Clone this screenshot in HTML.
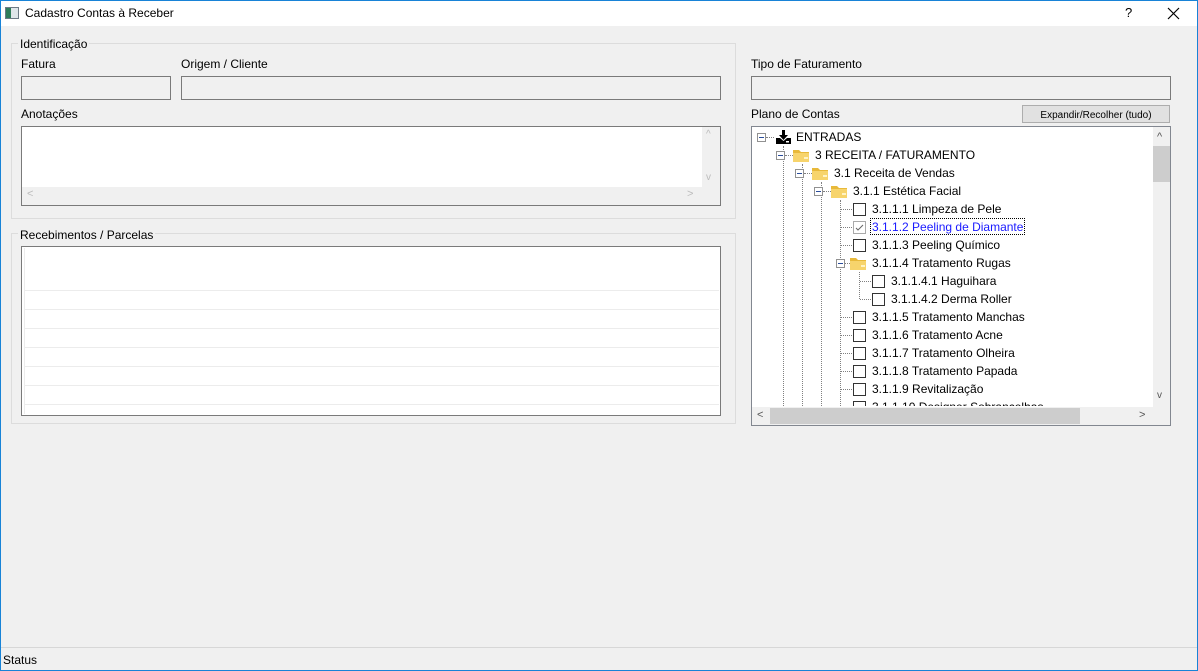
<!DOCTYPE html>
<html><head><meta charset="utf-8"><style>
*{margin:0;padding:0;box-sizing:border-box}
body{width:1198px;height:671px;background:#f0f0f0;font-family:"Liberation Sans",sans-serif;font-size:12px;color:#000;position:relative;overflow:hidden}
.a{position:absolute}
.win{left:0;top:0;width:1198px;height:671px;border:1px solid #1883d7;border-top:none}
.title{left:0;top:0;width:1198px;height:26px;background:#fff;border-top:1px solid #1883d7}
.grp{border:1px solid #dcdcdc}
.lg{background:#f0f0f0;padding:0 2px}
.inp{border:1px solid #7a7a7a;background:#f0f0f0}
.box{border:1px solid #828790;background:#fff}
.row{position:absolute;height:18px;line-height:18px;white-space:nowrap}
.exp{position:absolute;width:9px;height:9px;border:1px solid #919191;background:#fff}
.exp:after{content:"";position:absolute;left:1px;top:3px;width:5px;height:1px;background:#2a4d9b}
.cb{position:absolute;width:13px;height:13px;border:1px solid #333;background:#fff}
.vd{position:absolute;width:0;border-left:1px dotted #808080}
.hd{position:absolute;height:0;border-top:1px dotted #808080}
.fold{position:absolute;width:16px;height:13px}
.gl{position:absolute;left:25px;width:694px;height:1px;background:#ececec}
</style></head><body>
<div class="a title"></div>
<div class="a win"></div>
<div class="a" style="left:5px;top:7px;width:14px;height:12px;border:1px solid #6d7a86;background:linear-gradient(90deg,#2f7d5a 0 5px,#dfe6ea 5px)"></div>
<div class="a" style="left:25px;top:6px;font-size:12px">Cadastro Contas à Receber</div>
<div class="a" style="left:1125px;top:5px;font-size:13px">?</div>
<svg class="a" style="left:1167px;top:7px" width="13" height="13"><path d="M1 1L12 12M12 1L1 12" stroke="#000" stroke-width="1.2"/></svg>

<div class="a grp" style="left:11px;top:43px;width:725px;height:176px"></div>
<div class="a lg" style="left:18px;top:37px">Identificação</div>
<div class="a" style="left:21px;top:57px">Fatura</div>
<div class="a" style="left:181px;top:57px">Origem / Cliente</div>
<div class="a inp" style="left:21px;top:76px;width:150px;height:24px"></div>
<div class="a inp" style="left:181px;top:76px;width:540px;height:24px"></div>
<div class="a" style="left:21px;top:107px">Anotações</div>
<div class="a box" style="left:21px;top:126px;width:700px;height:80px;border-color:#7a7a7a"></div>
<div class="a" style="left:22px;top:187px;width:698px;height:18px;background:#f0f0f0"></div>
<div class="a" style="left:702px;top:127px;width:18px;height:60px;background:#f0f0f0"></div>
<div class="a" style="left:27px;top:188px;color:#bbb;font-size:11px">&lt;</div>
<div class="a" style="left:687px;top:188px;color:#bbb;font-size:11px">&gt;</div>
<div class="a" style="left:706px;top:129px;color:#bbb;font-size:10px">^</div>
<div class="a" style="left:706px;top:172px;color:#bbb;font-size:10px">v</div>

<div class="a grp" style="left:11px;top:233px;width:725px;height:191px"></div>
<div class="a lg" style="left:18px;top:228px">Recebimentos / Parcelas</div>
<div class="a box" style="left:21px;top:246px;width:700px;height:170px;border-color:#7a7a7a"></div>
<div class="a" style="left:24px;top:248px;width:1px;height:166px;background:#ececec"></div>
<div class="gl a" style="top:290px"></div><div class="gl a" style="top:309px"></div><div class="gl a" style="top:328px"></div><div class="gl a" style="top:347px"></div><div class="gl a" style="top:366px"></div><div class="gl a" style="top:385px"></div><div class="gl a" style="top:404px"></div>

<div class="a" style="left:751px;top:57px">Tipo de Faturamento</div>
<div class="a inp" style="left:751px;top:76px;width:420px;height:24px"></div>
<div class="a" style="left:751px;top:107px">Plano de Contas</div>
<div class="a" style="left:1022px;top:105px;width:148px;height:18px;background:#e1e1e1;border:1px solid #adadad;font-size:10px;text-align:center;line-height:19px">Expandir/Recolher (tudo)</div>
<div class="a box" style="left:751px;top:126px;width:420px;height:300px;overflow:hidden">
 <div class="a" style="left:401px;top:0;width:17px;height:280px;background:#f0f0f0"></div>
 <div class="a" style="left:401px;top:19px;width:17px;height:36px;background:#cdcdcd"></div>
 <div class="a" style="left:0;top:280px;width:418px;height:18px;background:#f0f0f0"></div>
 <div class="a" style="left:18px;top:281px;width:310px;height:16px;background:#cdcdcd"></div>
 <div class="a" style="left:5px;top:282px;color:#555;font-size:11px">&lt;</div>
 <div class="a" style="left:387px;top:282px;color:#555;font-size:11px">&gt;</div>
 <div class="a" style="left:405px;top:4px;color:#555;font-size:11px">^</div>
 <div class="a" style="left:405px;top:263px;color:#555;font-size:10px">v</div>
</div>
<div class="a" style="left:752px;top:128px;width:400px;height:278px;overflow:hidden">
 <div class="vd" style="left:31px;top:18px;height:270px"></div>
 <div class="vd" style="left:50px;top:36px;height:250px"></div>
 <div class="vd" style="left:69px;top:54px;height:230px"></div>
 <div class="vd" style="left:88px;top:72px;height:210px"></div>
 <div class="vd" style="left:107px;top:144px;height:27px"></div>
 <div class="exp" style="left:5px;top:5px"></div><div class="hd" style="left:14px;top:9px;width:8px"></div>
 <svg class="a" style="left:23px;top:2px" width="17" height="14"><path d="M7 0h3v5h3l-4.5 5L4 5h3z" fill="#000"/><path d="M1 8h4l3.5 3 3.5-3h4v6H1z" fill="#000"/><rect x="11" y="11" width="3" height="1.5" fill="#fff"/></svg>
 <div class="row" style="left:44px;top:0">ENTRADAS</div>
 <div class="exp" style="left:24px;top:23px"></div><div class="hd" style="left:33px;top:27px;width:8px"></div>
 <svg class="fold" style="left:41px;top:21px"><path d="M0 1h6l2 2h8v10H0z" fill="#e8b93a"/><rect x="0" y="4" width="16" height="9" fill="#f7d46c"/><rect x="11" y="8" width="4" height="2" fill="#fff3c4"/></svg>
 <div class="row" style="left:63px;top:18px">3 RECEITA / FATURAMENTO</div>
 <div class="exp" style="left:43px;top:41px"></div><div class="hd" style="left:52px;top:45px;width:8px"></div>
 <svg class="fold" style="left:60px;top:39px"><path d="M0 1h6l2 2h8v10H0z" fill="#e8b93a"/><rect x="0" y="4" width="16" height="9" fill="#f7d46c"/><rect x="11" y="8" width="4" height="2" fill="#fff3c4"/></svg>
 <div class="row" style="left:82px;top:36px">3.1 Receita de Vendas</div>
 <div class="exp" style="left:62px;top:59px"></div><div class="hd" style="left:71px;top:63px;width:8px"></div>
 <svg class="fold" style="left:79px;top:57px"><path d="M0 1h6l2 2h8v10H0z" fill="#e8b93a"/><rect x="0" y="4" width="16" height="9" fill="#f7d46c"/><rect x="11" y="8" width="4" height="2" fill="#fff3c4"/></svg>
 <div class="row" style="left:101px;top:54px">3.1.1 Estética Facial</div>
 <div class="hd" style="left:89px;top:81px;width:11px"></div><div class="cb" style="left:101px;top:75px"></div><div class="row" style="left:120px;top:72px">3.1.1.1 Limpeza de Pele</div>
 <div class="hd" style="left:89px;top:99px;width:11px"></div><div class="cb" style="left:101px;top:93px;border-color:#aaa"><svg width="11" height="11" style="position:absolute;left:0;top:0"><path d="M2 6l2 2 5-5" stroke="#666" fill="none"/></svg></div><div class="row" style="left:118px;top:90px;color:#1a1aff;border:1px dotted #000;padding:0 1px;height:17px;line-height:16px;background:#fff">3.1.1.2 Peeling de Diamante</div>
 <div class="hd" style="left:89px;top:117px;width:11px"></div><div class="cb" style="left:101px;top:111px"></div><div class="row" style="left:120px;top:108px">3.1.1.3 Peeling Químico</div>
 <div class="exp" style="left:84px;top:131px"></div><div class="hd" style="left:93px;top:135px;width:5px"></div>
 <svg class="fold" style="left:98px;top:129px"><path d="M0 1h6l2 2h8v10H0z" fill="#e8b93a"/><rect x="0" y="4" width="16" height="9" fill="#f7d46c"/><rect x="11" y="8" width="4" height="2" fill="#fff3c4"/></svg>
 <div class="row" style="left:120px;top:126px">3.1.1.4 Tratamento Rugas</div>
 <div class="hd" style="left:108px;top:153px;width:11px"></div><div class="cb" style="left:120px;top:147px"></div><div class="row" style="left:139px;top:144px">3.1.1.4.1 Haguihara</div>
 <div class="hd" style="left:108px;top:171px;width:11px"></div><div class="cb" style="left:120px;top:165px"></div><div class="row" style="left:139px;top:162px">3.1.1.4.2 Derma Roller</div>
 <div class="hd" style="left:89px;top:189px;width:11px"></div><div class="cb" style="left:101px;top:183px"></div><div class="row" style="left:120px;top:180px">3.1.1.5 Tratamento Manchas</div>
 <div class="hd" style="left:89px;top:207px;width:11px"></div><div class="cb" style="left:101px;top:201px"></div><div class="row" style="left:120px;top:198px">3.1.1.6 Tratamento Acne</div>
 <div class="hd" style="left:89px;top:225px;width:11px"></div><div class="cb" style="left:101px;top:219px"></div><div class="row" style="left:120px;top:216px">3.1.1.7 Tratamento Olheira</div>
 <div class="hd" style="left:89px;top:243px;width:11px"></div><div class="cb" style="left:101px;top:237px"></div><div class="row" style="left:120px;top:234px">3.1.1.8 Tratamento Papada</div>
 <div class="hd" style="left:89px;top:261px;width:11px"></div><div class="cb" style="left:101px;top:255px"></div><div class="row" style="left:120px;top:252px">3.1.1.9 Revitalização</div>
 <div class="hd" style="left:89px;top:279px;width:11px"></div><div class="cb" style="left:101px;top:273px"></div><div class="row" style="left:120px;top:270px">3.1.1.10 Designer Sobrancelhas</div>
</div>

<div class="a" style="left:1px;top:647px;width:1196px;height:1px;background:#d7d7d7"></div>
<div class="a" style="left:3px;top:653px">Status</div>
</body></html>
